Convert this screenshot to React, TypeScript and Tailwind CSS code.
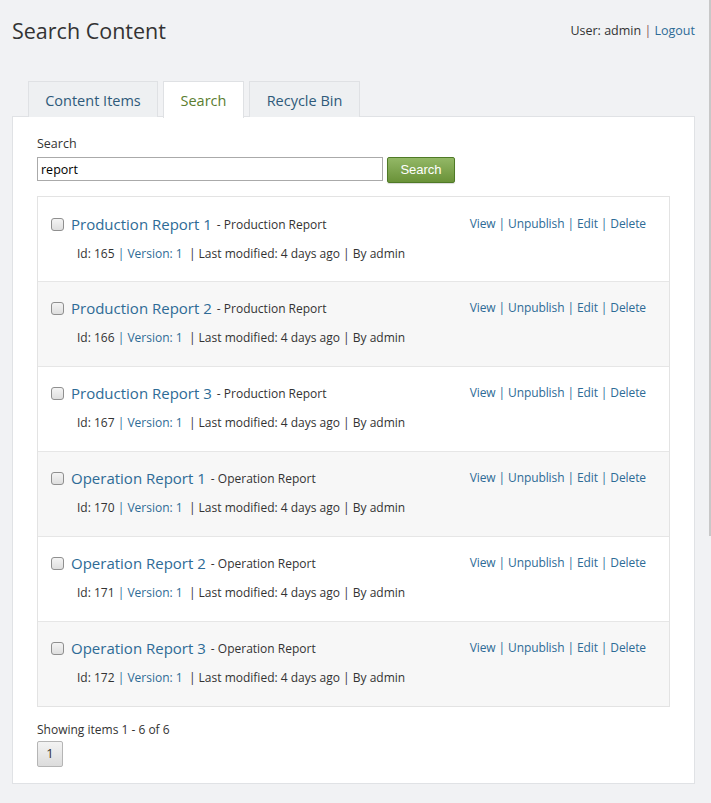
import React from "react";

const rows = [
  { title: "Production Report 1", type: "Production Report", id: 165 },
  { title: "Production Report 2", type: "Production Report", id: 166 },
  { title: "Production Report 3", type: "Production Report", id: 167 },
  { title: "Operation Report 1", type: "Operation Report", id: 170 },
  { title: "Operation Report 2", type: "Operation Report", id: 171 },
  { title: "Operation Report 3", type: "Operation Report", id: 172 },
];

const font = { fontFamily: '"Open Sans", "Noto Sans", sans-serif' };

export default function App() {
  return (
    <div
      className="relative min-h-[803px] w-[711px] bg-[#f1f2f4] text-[#333] text-[12px]"
      style={font}
    >
      <div className="absolute right-0 top-0 h-[536px] w-[2px] bg-[#c8c8c8]" />
      <div className="flex items-start justify-between pl-[12px] pr-[16px] pt-[15px]">
        <h1 className="text-[21.5px] leading-[32px] text-[#333]">Search Content</h1>
        <div className="pt-[7px] text-[12.5px]">
          User: admin <span className="text-[#8a5a5a]">|</span>{" "}
          <a className="text-[#2e6b96]">Logout</a>
        </div>
      </div>
      <div className="relative z-10 mt-[34px] flex h-[36px] gap-[5px] pl-[28px]">
        <div className="flex w-[130px] items-center justify-center border border-b-0 border-[#dfe1e4] bg-[#eef0f2] pt-[2px] text-[14.5px] text-[#2e5a7a]">
          Content Items
        </div>
        <div className="flex h-[37px] w-[81px] items-center justify-center border border-b-0 border-[#dfe1e4] bg-white pt-[1px] text-[14.5px] text-[#5b7d30]">
          Search
        </div>
        <div className="flex w-[111px] items-center justify-center border border-b-0 border-[#dfe1e4] bg-[#eef0f2] pt-[2px] text-[14.5px] text-[#2e5a7a]">
          Recycle Bin
        </div>
      </div>
      <div className="mx-[12px] mr-[16px] -mt-px border border-[#e0e2e5] bg-white px-[24px] pb-[16px] pt-[18px]">
        <div className="text-[12.5px] leading-[17px]">Search</div>
        <div className="mt-[5px] flex items-start gap-[4px]">
          <input
            readOnly
            value="report"
            className="h-[24px] w-[346px] border border-[#aaa] px-[3px] text-[12.5px] text-black outline-none"
            style={font}
          />
          <button
            className="h-[26px] w-[68px] rounded-[2px] border border-[#4f7a26] bg-gradient-to-b from-[#93b866] to-[#6a9238] text-[13px] text-white shadow-[0_1px_1px_rgba(0,0,0,0.15)]"
            style={{ fontFamily: '"Liberation Sans", Arial, sans-serif' }}
          >
            Search
          </button>
        </div>
        <div className="mt-[13px] border border-[#e3e3e3]">
          {rows.map((r, i) => (
            <div
              key={r.id}
              className={`px-[13px] ${
                i > 0 ? "h-[85px] border-t border-[#e6e6e6] pt-[15px]" : "h-[84px] pt-[16px]"
              } ${i % 2 === 1 ? "bg-[#f7f7f7]" : "bg-white"}`}
            >
              <div className="flex h-[22px] items-center justify-between pr-[10px]">
                <div className="flex items-center">
                  <span className="mr-[7px] inline-block h-[13px] w-[13px] rounded-[3px] border border-[#8f8f8f] bg-gradient-to-b from-[#f4f4f4] to-[#dedede]" />
                  <span className="text-[15px] text-[#2e6b96]">{r.title}</span>
                  <span className="ml-[5px] pt-[1px] text-[12px]">- {r.type}</span>
                </div>
                <div className="pl-[4px] text-[12px] tracking-[-0.1px] text-[#2e6b96]">
                  View | Unpublish | Edit | Delete
                </div>
              </div>
              <div className="mt-[11px] pl-[26px] text-[12px] leading-[16px]">
                Id: {r.id} <span className="text-[#2e6b96]">| Version: 1</span>
                {"\u00a0 "}| Last modified: 4 days ago | By admin
              </div>
            </div>
          ))}
        </div>
        <div className="mt-[15px] text-[12px] leading-[16px]">Showing items 1 - 6 of 6</div>
        <button
          className="mt-[3px] block h-[26px] w-[26px] rounded-[2px] border border-[#b5b5b5] bg-gradient-to-b from-[#f3f3f3] to-[#dcdcdc] text-[13px] text-[#333]"
          style={font}
        >
          1
        </button>
      </div>
    </div>
  );
}
